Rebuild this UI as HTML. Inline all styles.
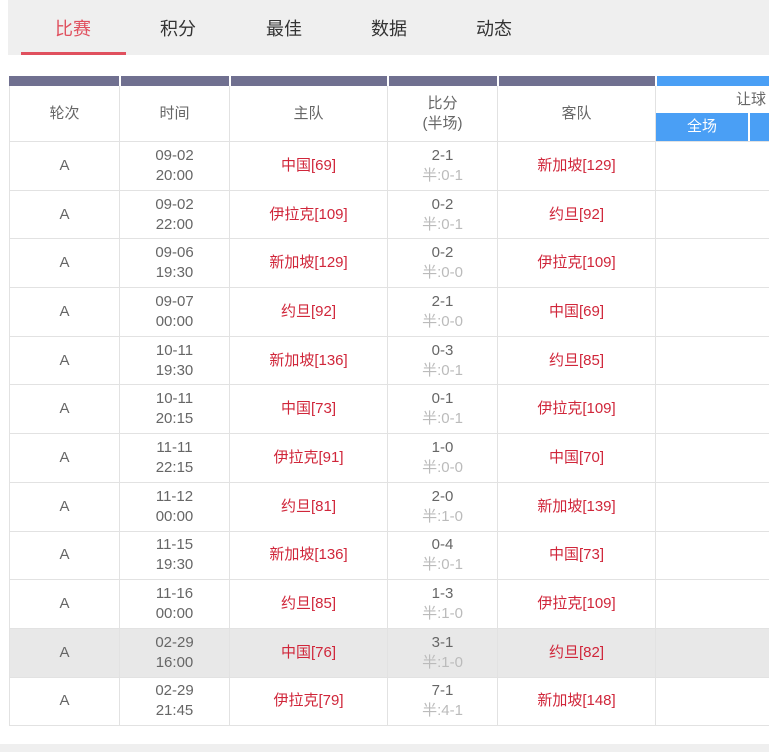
<!DOCTYPE html>
<html><head><meta charset="utf-8"><style>
body{margin:0;width:769px;height:752px;overflow:hidden;background:#fff;font-family:"Liberation Sans","Noto Sans CJK SC",sans-serif;position:relative}
.tabs{position:absolute;left:8px;top:0;width:761px;height:55px;background:#efefef}
.tab{position:absolute;top:15px;font-size:18px;color:#333;width:106px;text-align:center}
.ul{position:absolute;left:21px;top:52px;width:105px;height:3px;background:#e0505e}
.wrap{position:absolute;left:9px;top:76px;width:800px}
.row{display:flex;height:48.7px;border-bottom:1px solid #e2e2e2;box-sizing:border-box}
.c{box-sizing:border-box;border-left:1px solid #e2e2e2;display:flex;flex-direction:column;align-items:center;justify-content:center;text-align:center;color:#666;font-size:15px;line-height:20px;flex:none}
.w1{width:110px}.w2{width:110px}.w3{width:158px}.w4{width:110px}.w5{width:158px}.w6{width:154px;border-right:1px solid #e2e2e2}
.bar{display:flex;height:10px}
.bar div{height:10px;background:#707090;border-left:2px solid #fff;box-sizing:border-box;flex:none}
.r{color:#d0263a}.g{color:#bbb}
.hl{background:#e8e8e8}
.foot{position:absolute;left:0;top:744px;width:769px;height:8px;background:#efefef}
</style></head><body>
<div class="tabs"></div>
<div class="tab" style="left:20px;color:#e0505e">比赛</div>
<div class="tab" style="left:125px">积分</div>
<div class="tab" style="left:231px">最佳</div>
<div class="tab" style="left:336px">数据</div>
<div class="tab" style="left:441px">动态</div>
<div class="ul"></div>
<div class="wrap">
<div class="bar"><div style="width:110px;border-left:0"></div><div style="width:110px"></div><div style="width:158px"></div><div style="width:110px"></div><div style="width:158px"></div><div style="width:154px;background:#4a9ff5"></div></div>
<div class="row" style="height:56px"><div class="c w1">轮次</div><div class="c w2">时间</div><div class="c w3">主队</div><div class="c w4"><span>比分</span><span>(半场)</span></div><div class="c w5">客队</div>
<div class="c w6" style="display:block;position:relative"><div style="position:absolute;left:0;top:0;width:110px;text-align:right;line-height:27px">让球</div><div style="position:absolute;left:0;top:27px;width:92px;height:28px;background:#4a9ff5;color:#fff;line-height:28px">全场</div><div style="position:absolute;left:94px;top:27px;width:60px;height:28px;background:#4a9ff5"></div></div></div>
<div class="row"><div class="c w1">A</div><div class="c w2"><span>09-02</span><span>20:00</span></div><div class="c w3 r">中国[69]</div><div class="c w4"><span>2-1</span><span class="g">半:0-1</span></div><div class="c w5 r">新加坡[129]</div><div class="c w6"></div></div>
<div class="row"><div class="c w1">A</div><div class="c w2"><span>09-02</span><span>22:00</span></div><div class="c w3 r">伊拉克[109]</div><div class="c w4"><span>0-2</span><span class="g">半:0-1</span></div><div class="c w5 r">约旦[92]</div><div class="c w6"></div></div>
<div class="row"><div class="c w1">A</div><div class="c w2"><span>09-06</span><span>19:30</span></div><div class="c w3 r">新加坡[129]</div><div class="c w4"><span>0-2</span><span class="g">半:0-0</span></div><div class="c w5 r">伊拉克[109]</div><div class="c w6"></div></div>
<div class="row"><div class="c w1">A</div><div class="c w2"><span>09-07</span><span>00:00</span></div><div class="c w3 r">约旦[92]</div><div class="c w4"><span>2-1</span><span class="g">半:0-0</span></div><div class="c w5 r">中国[69]</div><div class="c w6"></div></div>
<div class="row"><div class="c w1">A</div><div class="c w2"><span>10-11</span><span>19:30</span></div><div class="c w3 r">新加坡[136]</div><div class="c w4"><span>0-3</span><span class="g">半:0-1</span></div><div class="c w5 r">约旦[85]</div><div class="c w6"></div></div>
<div class="row"><div class="c w1">A</div><div class="c w2"><span>10-11</span><span>20:15</span></div><div class="c w3 r">中国[73]</div><div class="c w4"><span>0-1</span><span class="g">半:0-1</span></div><div class="c w5 r">伊拉克[109]</div><div class="c w6"></div></div>
<div class="row"><div class="c w1">A</div><div class="c w2"><span>11-11</span><span>22:15</span></div><div class="c w3 r">伊拉克[91]</div><div class="c w4"><span>1-0</span><span class="g">半:0-0</span></div><div class="c w5 r">中国[70]</div><div class="c w6"></div></div>
<div class="row"><div class="c w1">A</div><div class="c w2"><span>11-12</span><span>00:00</span></div><div class="c w3 r">约旦[81]</div><div class="c w4"><span>2-0</span><span class="g">半:1-0</span></div><div class="c w5 r">新加坡[139]</div><div class="c w6"></div></div>
<div class="row"><div class="c w1">A</div><div class="c w2"><span>11-15</span><span>19:30</span></div><div class="c w3 r">新加坡[136]</div><div class="c w4"><span>0-4</span><span class="g">半:0-1</span></div><div class="c w5 r">中国[73]</div><div class="c w6"></div></div>
<div class="row"><div class="c w1">A</div><div class="c w2"><span>11-16</span><span>00:00</span></div><div class="c w3 r">约旦[85]</div><div class="c w4"><span>1-3</span><span class="g">半:1-0</span></div><div class="c w5 r">伊拉克[109]</div><div class="c w6"></div></div>
<div class="row hl"><div class="c w1">A</div><div class="c w2"><span>02-29</span><span>16:00</span></div><div class="c w3 r">中国[76]</div><div class="c w4"><span>3-1</span><span class="g">半:1-0</span></div><div class="c w5 r">约旦[82]</div><div class="c w6"></div></div>
<div class="row"><div class="c w1">A</div><div class="c w2"><span>02-29</span><span>21:45</span></div><div class="c w3 r">伊拉克[79]</div><div class="c w4"><span>7-1</span><span class="g">半:4-1</span></div><div class="c w5 r">新加坡[148]</div><div class="c w6"></div></div>
</div>
<div class="foot"></div>
</body></html>
